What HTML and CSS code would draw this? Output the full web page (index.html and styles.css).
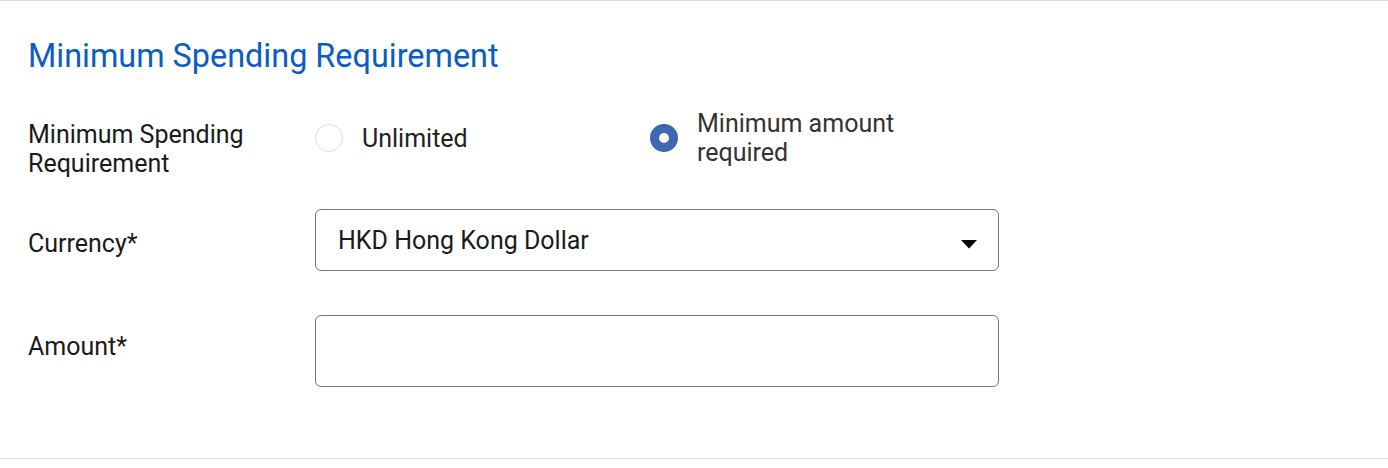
FILE: index.html
```html
<!DOCTYPE html>
<html lang="en">
<head>
    <meta charset="UTF-8">
    <meta name="viewport" content="width=device-width, initial-scale=1.0">
    <title>Minimum Spending Requirement</title>
    <link rel="stylesheet" href="styles.css">
</head>
<body>

    <section class="panel">
        <h2 class="panel-title">Minimum Spending Requirement</h2>

        <!-- Tipo de requisito -->
        <div class="form-row row-radio">
            <div class="field-label label-top">Minimum Spending Requirement</div>
            <div class="radio-group">
                <label class="radio-option">
                    <span class="radio-circle"></span>
                    <span class="radio-text">Unlimited</span>
                </label>
                <label class="radio-option">
                    <span class="radio-circle checked"></span>
                    <span class="radio-text">Minimum amount required</span>
                </label>
            </div>
        </div>

        <!-- Moneda -->
        <div class="form-row row-currency">
            <div class="field-label label-low">Currency*</div>
            <div class="select-box">
                <span class="select-value">HKD Hong Kong Dollar</span>
                <svg class="select-arrow" width="18" height="9" viewBox="0 0 18 9">
                    <polygon points="1,0 17,0 9,8.5" fill="#000"/>
                </svg>
            </div>
        </div>

        <!-- Monto -->
        <div class="form-row row-amount">
            <div class="field-label label-high">Amount*</div>
            <div class="text-input"></div>
        </div>
    </section>

</body>
</html>
```

FILE: styles.css
```css
/* Estilo general */
body {
    font-family: Roboto, "Liberation Sans", Arial, sans-serif;
    background-color: #fff;
    margin: 0;
    padding: 0;
}
.panel {
    border-top: 1px solid #dcdcdc;
    border-bottom: 1px solid #dcdcdc;
    height: 457px;
    padding: 0 28px;
    box-sizing: content-box;
}
.panel-title {
    font-size: 32.4px;
    font-weight: 400;
    line-height: 38px;
    color: #0b5cc3;
    margin: 36px 0 0;
}
.form-row {
    display: grid;
    grid-template-columns: 287px 684px;
    align-items: center;
}
.field-label {
    font-size: 25px;
    line-height: 29px;
    color: #1a1a1a;
}
.label-top { padding-top: 11px; align-self: start; }
.label-low { padding-top: 7px; }
.label-high { padding-bottom: 9px; }

.row-radio { margin-top: 34px; align-items: start; }
.row-currency { margin-top: 31px; }
.row-amount { margin-top: 44px; }

.radio-group {
    display: flex;
    height: 58px;
}
.radio-option {
    display: flex;
    align-items: center;
    gap: 19px;
    width: 335px;
    cursor: pointer;
}
.radio-circle {
    flex: none;
    width: 28px;
    height: 28px;
    border-radius: 50%;
    border: 1px solid #dedede;
    box-sizing: border-box;
    background: #fff;
}
.radio-circle.checked {
    border: 9px solid #3d69b1;
}
.radio-text {
    font-size: 25px;
    line-height: 29px;
    color: #333;
    max-width: 240px;
}
.radio-option:first-child .radio-text {
    color: #222;
}
.select-box,
.text-input {
    border: 1px solid #777;
    border-radius: 6px;
    box-sizing: border-box;
    width: 684px;
}
.select-box {
    height: 62px;
    display: flex;
    align-items: center;
    justify-content: space-between;
    padding: 0 20px 0 22px;
    cursor: pointer;
}
.select-value {
    font-size: 25px;
    color: #1a1a1a;
}
.select-arrow { margin-top: 8px; }
.text-input { height: 72px; }
```
